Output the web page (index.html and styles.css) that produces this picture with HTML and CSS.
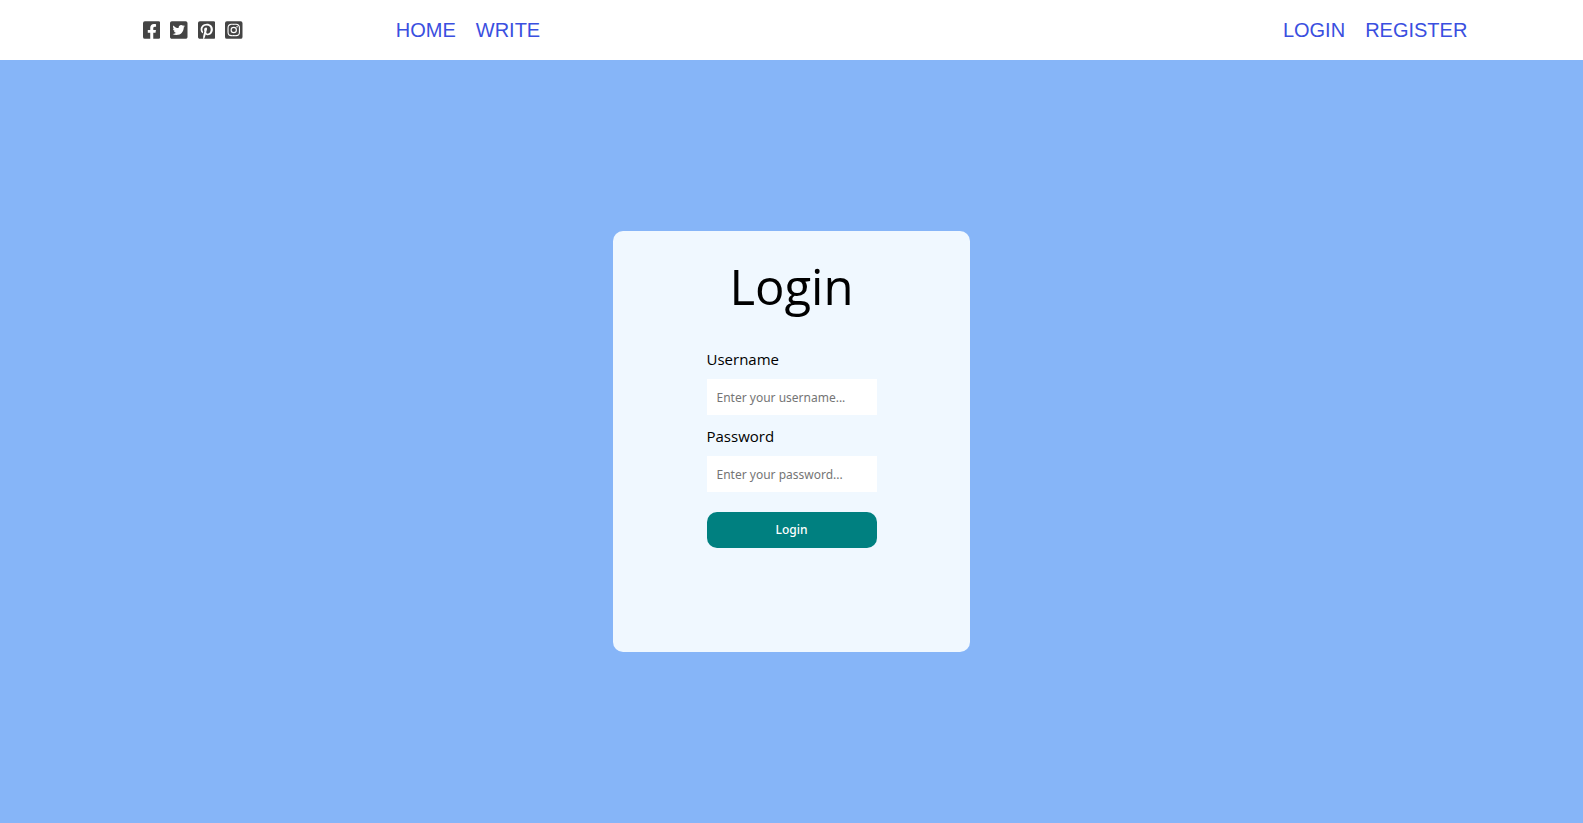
FILE: index.html
```html
<!DOCTYPE html>
<html lang="en">
<head>
<meta charset="utf-8">
<title>Login</title>
<link rel="stylesheet" href="styles.css">
</head>
<body>
<header class="top">
  <div class="top-side">
    <a class="social" href="#" aria-label="Facebook"><svg viewBox="0 0 448 512"><path d="M400 32H48A48 48 0 0 0 0 80v352a48 48 0 0 0 48 48h137.250V327.690h-63V256h63v-54.640c0-62.150 37-96.480 93.670-96.480 27.140 0 55.520 4.840 55.520 4.840v61h-31.270c-30.810 0-40.420 19.120-40.420 38.730V256h68.780l-11 71.690h-57.780V480H400a48 48 0 0 0 48-48V80a48 48 0 0 0-48-48z"/></svg></a>
    <a class="social" href="#" aria-label="Twitter"><svg viewBox="0 0 448 512"><path d="M400 32H48C21.500 32 0 53.500 0 80v352c0 26.500 21.500 48 48 48h352c26.500 0 48-21.500 48-48V80c0-26.500-21.500-48-48-48zm-48.900 158.800c.2 2.800.2 5.700.2 8.500 0 86.700-66 186.600-186.600 186.600-37.200 0-71.700-10.800-100.700-29.400 5.300.6 10.400.8 15.800.8 30.700 0 58.900-10.400 81.400-28-28.800-.6-53-19.500-61.300-45.500 10.100 1.500 19.200 1.500 29.600-1.200-30-6.100-52.500-32.500-52.500-64.400v-.8c8.700 4.900 18.900 7.900 29.600 8.300a65.447 65.447 0 0 1-29.200-54.600c0-12.200 3.200-23.400 8.900-33.100 32.300 39.800 80.800 65.800 135.200 68.600-9.300-44.500 24-80.600 64-80.600 18.900 0 35.900 7.900 47.900 20.700 14.800-2.800 29-8.300 41.600-15.800-4.900 15.200-15.200 28-28.800 36.100 13.200-1.400 26-5.100 37.800-10.200-8.900 13.100-20.100 24.700-32.900 34z"/></svg></a>
    <a class="social" href="#" aria-label="Pinterest"><svg viewBox="0 0 448 512"><path d="M448 80v352c0 26.500-21.500 48-48 48H154.400c9.800-16.400 22.400-40 27.400-59.300 3-11.500 15.300-58.400 15.300-58.400 8 15.300 31.400 28.200 56.300 28.200 74.100 0 127.400-68.100 127.400-152.700 0-81.100-66.200-141.800-151.400-141.800-106 0-162.200 71.100-162.200 148.600 0 36 19.200 80.800 49.800 95.100 4.700 2.200 7.100 1.200 8.200-3.300.8-3.400 5-20.100 6.800-27.800.6-2.500.3-4.600-1.700-7-10.100-12.300-18.300-34.900-18.300-56 0-54.200 41-106.600 110.900-106.600 60.300 0 102.600 41.100 102.600 99.900 0 66.400-33.500 112.400-77.200 112.400-24.100 0-42.100-19.900-36.400-44.400 6.900-29.200 20.300-60.700 20.300-81.800 0-53-75.500-45.700-75.500 25 0 21.700 7.300 36.500 7.300 36.500-31.400 132.800-36.100 134.500-29.600 192.600l2.200.8H48c-26.500 0-48-21.500-48-48V80c0-26.500 21.500-48 48-48h352c26.500 0 48 21.500 48 48z"/></svg></a>
    <a class="social" href="#" aria-label="Instagram"><svg viewBox="0 0 448 512"><path d="M224 202.660A53.340 53.340 0 1 0 277.360 256 53.380 53.380 0 0 0 224 202.660zm124.710-41a54 54 0 0 0-30.410-30.410c-21-8.290-71-6.430-94.300-6.430s-73.250-1.930-94.310 6.430a54 54 0 0 0-30.410 30.410c-8.280 21-6.430 71.050-6.430 94.330s-1.850 73.270 6.470 94.340a54 54 0 0 0 30.410 30.410c21 8.290 71 6.430 94.310 6.430s73.240 1.930 94.300-6.430a54 54 0 0 0 30.410-30.410c8.350-21 6.430-71.050 6.430-94.330s1.920-73.260-6.430-94.330zM224 338a82 82 0 1 1 82-82 81.900 81.900 0 0 1-82 82zm85.380-148.300a19.140 19.140 0 1 1 19.130-19.140 19.100 19.100 0 0 1-19.090 19.180zM400 32H48A48 48 0 0 0 0 80v352a48 48 0 0 0 48 48h352a48 48 0 0 0 48-48V80a48 48 0 0 0-48-48zm-17.120 290c-1.290 25.630-7.140 48.340-25.850 67s-41.400 24.630-67 25.850c-26.410 1.490-105.590 1.490-132 0-25.630-1.290-48.260-7.150-67-25.850s-24.630-41.420-25.850-67c-1.490-26.420-1.490-105.610 0-132 1.290-25.630 7.070-48.340 25.850-67s41.470-24.560 67-25.780c26.410-1.490 105.590-1.490 132 0 25.630 1.290 48.330 7.150 67 25.850s24.630 41.420 25.850 67.050c1.490 26.320 1.490 105.440 0 131.880z"/></svg></a>
  </div>
  <nav class="top-center" aria-label="Main">
    <a class="top-link" href="#">HOME</a>
    <a class="top-link" href="#">WRITE</a>
  </nav>
  <nav class="top-side" aria-label="Account">
    <a class="top-link" href="#">LOGIN</a>
    <a class="top-link" href="#">REGISTER</a>
  </nav>
</header>
<main class="page">
  <section class="card">
    <h1 class="title">Login</h1>
    <form class="form">
      <label class="label" for="username">Username</label>
      <input class="field" id="username" type="text" placeholder="Enter your username...">
      <label class="label" for="password">Password</label>
      <input class="field" id="password" type="password" placeholder="Enter your password...">
      <button class="submit" type="button">Login</button>
    </form>
  </section>
</main>
</body>
</html>
```

FILE: styles.css
```css
* {
  box-sizing: border-box;
}

body {
  margin: 0;
  min-height: 100vh;
  display: flex;
  flex-direction: column;
  background: #86b5f8;
  font-family: "Segoe UI", "Open Sans", sans-serif;
}

.top {
  display: flex;
  height: 60px;
  background: #fff;
  font-family: Arial, "Liberation Sans", sans-serif;
}

.top-side,
.top-center {
  display: flex;
  align-items: center;
}

.top-side {
  flex: 3;
  justify-content: center;
}

.top-center {
  flex: 6;
}

.social {
  margin-right: 10px;
  color: #444;
}

.social svg {
  display: block;
  height: 20px;
  fill: currentColor;
}

.top-link {
  margin-right: 20px;
  font-size: 20px;
  line-height: 24px;
  color: #3a4fe0;
  text-decoration: none;
}

.page {
  flex: 1;
  display: flex;
  align-items: center;
  justify-content: center;
}

.card {
  display: flex;
  flex-direction: column;
  align-items: center;
  width: 357px;
  max-width: 100%;
  padding: 20px 20px 104px;
  border-radius: 10px;
  background: #f0f8ff;
}

.title {
  margin: 0;
  font-size: 49px;
  line-height: 71px;
  font-weight: 400;
}

.form {
  display: flex;
  flex-direction: column;
  width: 170px;
  margin-top: 16px;
}

.label {
  margin: 10px 0 8px;
  font-size: 15px;
  line-height: 23px;
}

.field,
.submit {
  width: 100%;
  height: 36px;
  padding: 10px;
  border: 0;
  font-family: "Segoe UI", "Noto Sans", sans-serif;
  font-size: 12px;
  line-height: 16px;
}

.field {
  background: #fff;
}

.field::placeholder {
  color: #757575;
}

.submit {
  margin-top: 20px;
  border-radius: 10px;
  background: #008080;
  color: #fff;
  font-weight: 500;
}
```
